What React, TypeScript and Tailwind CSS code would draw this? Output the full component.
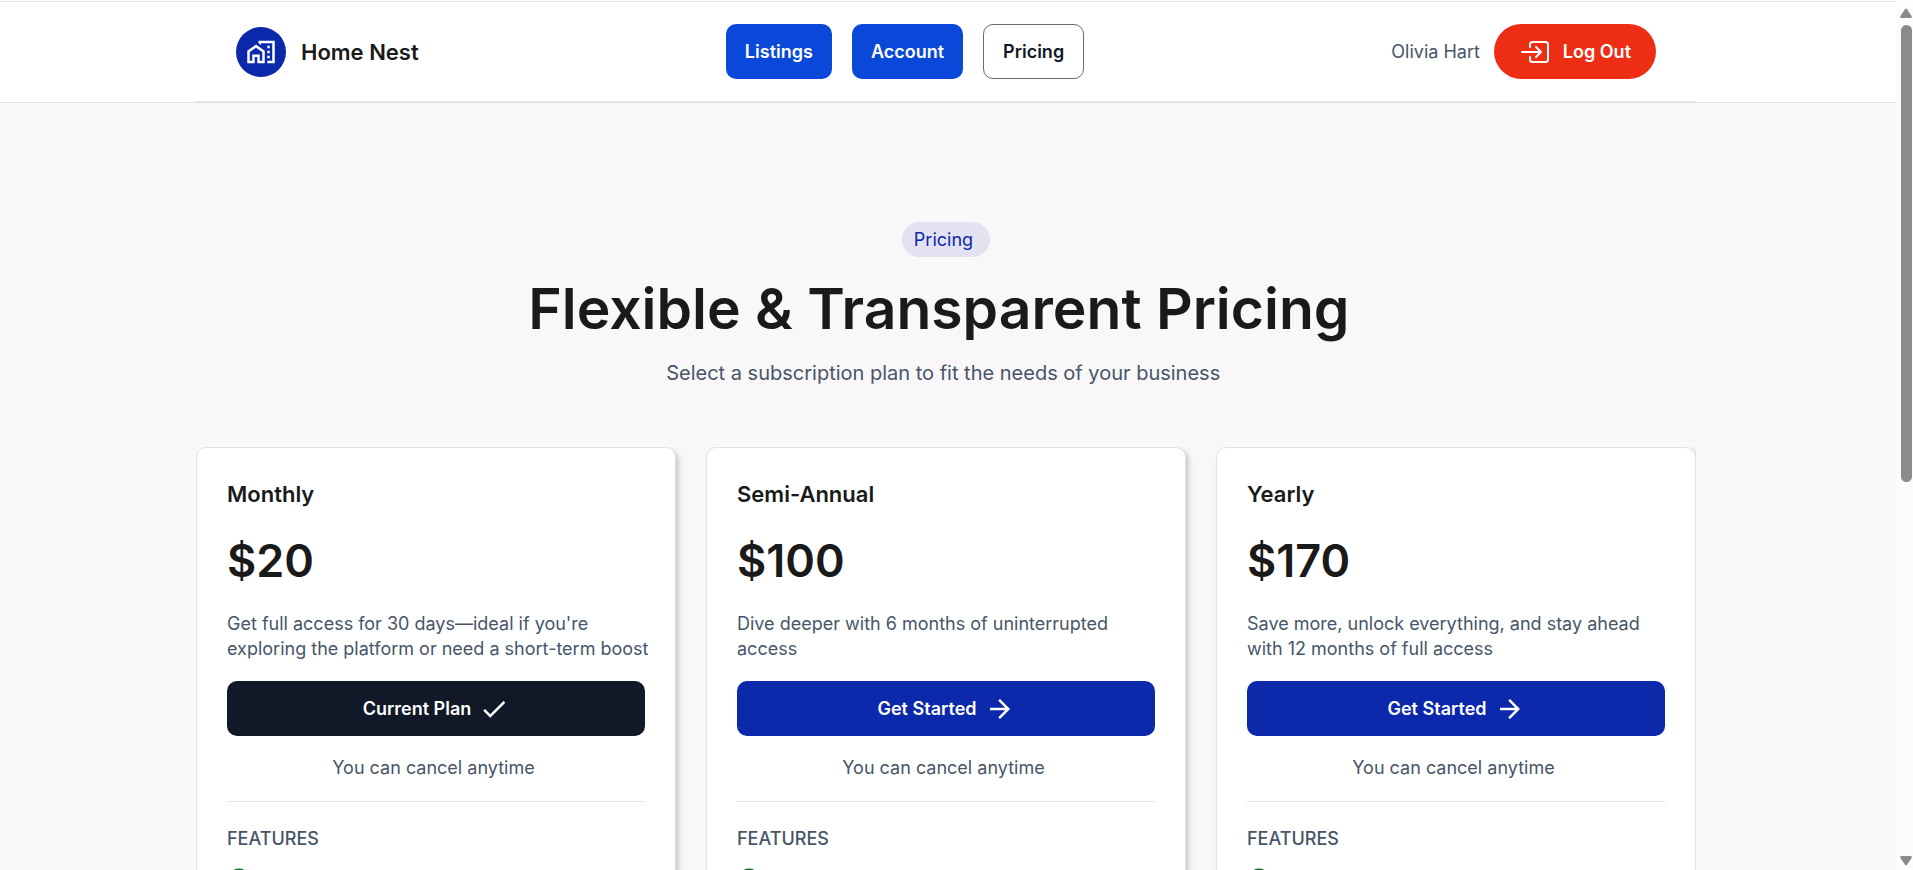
import type { ReactNode } from "react";
import { FaCheckCircle } from "react-icons/fa";
import { IoEnterOutline } from "react-icons/io5";
import { MdArrowForward, MdCheck, MdOutlineMapsHomeWork } from "react-icons/md";

type Plan = {
  name: string;
  price: string;
  description: string;
  current?: boolean;
};

const plans: Plan[] = [
  {
    name: "Monthly",
    price: "$20",
    description:
      "Get full access for 30 days—ideal if you're exploring the platform or need a short-term boost",
    current: true,
  },
  {
    name: "Semi-Annual",
    price: "$100",
    description: "Dive deeper with 6 months of uninterrupted access",
  },
  {
    name: "Yearly",
    price: "$170",
    description: "Save more, unlock everything, and stay ahead with 12 months of full access",
  },
];

function NavLink({ active, children }: { active?: boolean; children: ReactNode }) {
  const base = "flex h-[55px] items-center rounded-[10px] px-[19px] font-semibold";
  return (
    <a
      href="#"
      aria-current={active ? "page" : undefined}
      className={
        active
          ? `${base} border border-[#6b6b6b] bg-white text-[#111827]`
          : `${base} bg-[#0948d8] text-white`
      }
    >
      {children}
    </a>
  );
}

function Header() {
  return (
    <header className="border-y border-[#e3e1e3] bg-white pr-1">
      <div className="mx-auto flex h-[100px] max-w-[1500px] items-center justify-between border-b border-[#e3e1e3] px-10">
        <a href="#" className="flex items-center gap-[15px]">
          <span className="flex size-[50px] items-center justify-center rounded-full bg-[#0c29ab] text-white">
            <MdOutlineMapsHomeWork size={30} />
          </span>
          <span className="text-[22px] leading-8 font-semibold text-[#1a1a1a]">Home Nest</span>
        </a>
        <nav className="flex gap-5">
          <NavLink>Listings</NavLink>
          <NavLink>Account</NavLink>
          <NavLink active>Pricing</NavLink>
        </nav>
        <div className="flex items-center gap-[14px]">
          <span className="text-[#475569]">Olivia Hart</span>
          <button
            type="button"
            className="flex h-[55px] items-center gap-3 rounded-full bg-[#ed2e14] px-[25px] font-semibold text-white"
          >
            <IoEnterOutline size={32} />
            Log Out
          </button>
        </div>
      </div>
    </header>
  );
}

function PlanCard({ plan }: { plan: Plan }) {
  return (
    <article className="rounded-[10px] border border-[#e2e2e2] bg-white p-[30px] shadow-[3px_3px_5px_rgba(0,0,0,0.18)]">
      <h2 className="text-[22px] leading-8 font-semibold text-[#1a1a1a]">{plan.name}</h2>
      <p className="mt-6 text-[45px] leading-[54px] font-semibold text-[#1a1a1a]">{plan.price}</p>
      <p className="mt-[23px] -mr-2 leading-[25px] text-[#475569]">{plan.description}</p>
      <button
        type="button"
        className={
          plan.current
            ? "mt-5 flex h-[55px] w-full items-center justify-center gap-2 rounded-[10px] bg-[#111827] font-semibold text-white"
            : "mt-5 flex h-[55px] w-full items-center justify-center gap-2 rounded-[10px] bg-[#0c29ab] font-semibold text-white"
        }
      >
        {plan.current ? "Current Plan" : "Get Started"}
        {plan.current ? <MdCheck size={30} /> : <MdArrowForward size={30} />}
      </button>
      <p className="mt-[19px] text-center leading-[25px] text-[#475569]">
        You can cancel anytime&nbsp;
      </p>
      <hr className="mt-[21px] border-[#e2e2e2]" />
      <h3 className="mt-6 leading-[25px] font-medium text-[#475569]">FEATURES</h3>
      <ul className="mt-[17px] flex flex-col gap-4 text-[#15702f]">
        <li>
          <FaCheckCircle size={24} />
        </li>
      </ul>
    </article>
  );
}

function ScrollRail() {
  return (
    <div aria-hidden="true" className="flex w-[17px] flex-col items-end bg-[#fcfcfc] pt-[7px] pr-px pb-1">
      <svg width="12" height="10" viewBox="0 0 12 10" fill="#8b8b8b">
        <path d="M5 1.2Q6 0 7 1.2L11.6 8Q12.2 10 10.8 10H1.2Q-.2 10 .4 8Z" />
      </svg>
      <div className="mt-[7px] flex w-[11px] flex-1 flex-col">
        <div className="basis-[55%] rounded-full bg-[#8b8b8b]" />
      </div>
      <svg width="12" height="10" viewBox="0 0 12 10" fill="#8b8b8b">
        <path d="M5 8.8Q6 10 7 8.8L11.6 2Q12.2 0 10.8 0H1.2Q-.2 0 .4 2Z" />
      </svg>
    </div>
  );
}

export default function App() {
  return (
    <div className="h-screen overflow-hidden bg-white pt-px font-['Inter',sans-serif] text-[18px]">
      <div className="flex h-full">
        <div className="min-w-0 flex-1 overflow-y-auto bg-[#f9f7f8] [scrollbar-width:none]">
          <Header />
          <main className="pt-[119px] pr-1 pb-16">
            <section className="flex flex-col items-center text-center">
              <span className="flex h-[35px] items-center rounded-full bg-[#e2e2f0] px-3 text-[#0c29ab]">
                Pricing&nbsp;
              </span>
              <h1 className="mt-4 text-[57px] leading-[72px] font-semibold text-[#1a1a1a]">
                Flexible &amp; Transparent Pricing&nbsp;
              </h1>
              <p className="mt-[13px] text-[20px] leading-[30px] text-[#475569]">
                Select a subscription plan to fit the needs of your business&nbsp;
              </p>
            </section>
            <section className="mx-auto mt-[59px] grid max-w-[1500px] grid-cols-3 gap-[30px] overflow-hidden">
              {plans.map((plan) => (
                <PlanCard key={plan.name} plan={plan} />
              ))}
            </section>
          </main>
        </div>
        <ScrollRail />
      </div>
    </div>
  );
}
